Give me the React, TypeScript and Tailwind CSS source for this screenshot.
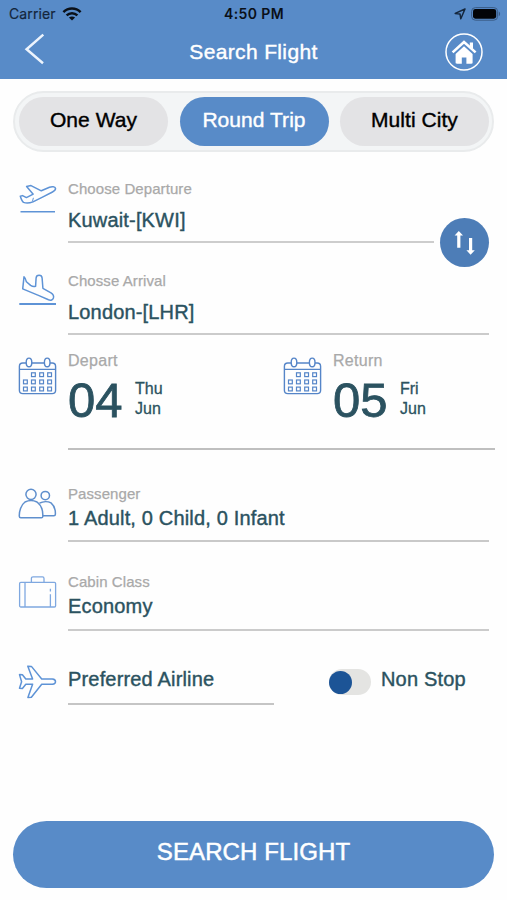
import React, { useState } from 'react';
import clsx from 'clsx';

const TABS = ['One Way', 'Round Trip', 'Multi City'];

/* ---------- Icons ---------- */

const DepartureIcon = () => (
    <svg width="40" height="32" viewBox="0 0 40 32" fill="none" stroke="#5e93d6" strokeWidth="1.5" strokeLinejoin="round">
        <path d="M2.3 13.3 L4.6 12.6 L8.4 14.6 L15.2 11.2 L8.6 3.4 L13 2.6 L23.3 7.8 L31.5 4.2 C34 3.2 37 3.6 37.5 5.2 C37.8 6.6 36.4 8 34.5 9 L24.5 14.2 L15 18.9 C11.5 20.2 8 20.4 5.6 19.4 C4 18.4 3 15.6 2.3 13.3Z" />
        <path d="M15.4 14.8 L14.4 18.6" strokeWidth="1" />
        <path d="M2.5 28.8 H37" strokeWidth="1.6" />
    </svg>
);

const ArrivalIcon = () => (
    <svg width="40" height="33" viewBox="0 0 40 33" fill="none" stroke="#5e93d6" strokeWidth="1.5" strokeLinejoin="round">
        <path d="M6 3.8 L4.7 15.9 L21 22.6 L30.5 26.8 C33 27.8 34.8 26.8 35.4 25 C36 23 35 21 33 19.8 L24.9 15.3 L24.1 5 C23.8 1.4 18.4 1.3 18.1 5 L17.6 13.2 C15.8 13.8 14.2 13.4 12.6 12.4 L8.4 8.8 C8 7 7.4 5 6 3.8Z" />
        <path d="M1.3 31 H38" strokeWidth="1.8" />
    </svg>
);

const CALENDAR_CELLS = [
    [15.4, 18.7], [23.6, 18.7], [31.6, 18.7],
    [7.4, 25.9], [15.4, 25.9], [23.6, 25.9], [31.6, 25.9],
    [7.4, 33], [15.4, 33], [23.6, 33], [31.6, 33],
];

const CalendarIcon = () => (
    <svg width="40" height="40" viewBox="0 0 40 40" fill="none" stroke="#5585c8" strokeWidth="1.4">
        <rect x="1.4" y="7" width="36.2" height="30.6" rx="3.4" />
        <path d="M1.4 13.4 H37.6" strokeWidth="1.1" />
        <ellipse cx="11" cy="6.4" rx="2.8" ry="4.3" fill="white" />
        <ellipse cx="29.2" cy="6.4" rx="2.8" ry="4.3" fill="white" />
        {CALENDAR_CELLS.map(([x, y]) => (
            <rect key={`${x}-${y}`} x={x - 1.9} y={y - 1.9} width="3.8" height="3.8" strokeWidth="1.2" />
        ))}
    </svg>
);

const PassengerIcon = () => (
    <svg width="40" height="34" viewBox="0 0 40 34" fill="none" stroke="#5f8fcd" strokeWidth="1.5" strokeLinejoin="round">
        <circle cx="27.3" cy="9.6" r="4.2" />
        <path d="M21.5 17.2 C25 15.2 30 15.2 33 16.9 C36 19.4 37.5 24 37.4 28.2 C37.4 29.2 36.8 29.7 35.8 29.7 H24.7" />
        <circle cx="13" cy="8.3" r="5.1" />
        <path d="M7 16 C10.5 14.2 15.5 14.2 19 16 C23 19 25.1 25 24.8 30.4 C24.8 31.3 24.2 31.7 23.3 31.7 H2.8 C1.8 31.7 1.3 31.2 1.3 30.2 C1.1 25 3.2 18.8 7 16Z" />
    </svg>
);

const SuitcaseIcon = () => (
    <svg width="40" height="36" viewBox="0 0 40 36" fill="none" stroke="#7fa8e0" strokeWidth="1.3" strokeLinejoin="round">
        <rect x="1.6" y="8.4" width="36" height="24.6" rx="1.2" />
        <path d="M13.4 8.4 V4.4 C13.4 3.3 14 2.8 15 2.8 H24.5 C25.6 2.8 26 3.3 26 4.4 V8.4" />
        <path d="M7 8.4 V33 M32.4 20.2 V33 M32.4 14.8 V17.6" />
    </svg>
);

const PlaneIcon = () => (
    <svg width="40" height="36" viewBox="0 0 40 36" fill="none" stroke="#5e93d6" strokeWidth="1.5" strokeLinejoin="round">
        <path d="M9.8 2.2 L13.4 2.4 L23.7 15 H34.4 C36.2 15.2 37.5 16.4 37.5 17.7 C37.5 19 36.2 20.1 34.4 20.3 H23.7 L13.4 33.2 L9.9 33.4 L14.6 20.3 H7.8 L4.4 24.5 L1.5 24.3 L3.6 17.7 L1.5 10.6 L4.4 10.7 L7.8 15 H14.6Z" />
    </svg>
);

const HomeIcon = () => (
    <svg width="38" height="38" viewBox="0 0 38 38" fill="none">
        <circle cx="19" cy="19" r="18" stroke="white" strokeWidth="1.5" />
        <path d="M7.6 19.4 L19 9 L30.6 19.4" stroke="white" strokeWidth="2.6" />
        <path d="M24.8 9.4 H28 V16 L24.8 13.2Z" fill="white" />
        <path d="M19 13.2 L27.6 21 V29.6 C27.6 30.4 27.2 30.8 26.4 30.8 H21.4 V24.4 H16.8 V30.8 H11.8 C11 30.8 10.6 30.4 10.6 29.6 V21Z" fill="white" />
    </svg>
);

const SwapIcon = () => (
    <svg width="49" height="49" viewBox="0 0 49 49" fill="white">
        <path d="M18.8 13 L23 17.6 H20.4 V29.8 H17.2 V17.6 H14.6Z" />
        <path d="M30.6 36.8 L26.4 32.2 H29 V20 H32.2 V32.2 H34.8Z" />
    </svg>
);

const WifiIcon = () => (
    <svg width="20" height="14" viewBox="0 0 20 14" fill="none" stroke="#0a1018" strokeWidth="2.5">
        <path d="M1.4 5.1 C6.2 0.4 13.8 0.4 18.6 5.1" />
        <path d="M4.6 8.3 C7.7 5.4 12.3 5.4 15.4 8.3" />
        <path d="M10 13.6 L6.9 10.5 C8.6 9 11.4 9 13.1 10.5Z" fill="#0a1018" stroke="none" />
    </svg>
);

const LocationIcon = () => (
    <svg width="12" height="12" viewBox="0 0 12 12" fill="none" stroke="#14263c" strokeWidth="1.5" strokeLinejoin="round">
        <path d="M11 1 L1.2 5.4 L6 6 L6.8 10.8Z" />
    </svg>
);

const BatteryIcon = () => (
    <svg width="30" height="14" viewBox="0 0 30 14">
        <rect x="0.6" y="0.6" width="26" height="12.6" rx="3.8" fill="none" stroke="#3a5c86" strokeWidth="1" />
        <rect x="2" y="2.1" width="23.2" height="9.6" rx="2.4" fill="#020407" />
        <path d="M27.8 4.6 C29.6 5.4 29.6 8.4 27.8 9.2Z" fill="#3a5c86" />
    </svg>
);

/* ---------- Form pieces ---------- */

const Label = ({ children }: { children: React.ReactNode }) => (
    <span className="block text-[15px] leading-[17px] tracking-[0.08px] text-[#a9a9a9] [-webkit-text-stroke:0.25px_#a9a9a9]">
        {children}
    </span>
);

const Value = ({ children }: { children: React.ReactNode }) => (
    <span className="block text-[20px] leading-[21px] tracking-[0.17px] text-[#2b5260] whitespace-nowrap [-webkit-text-stroke:0.4px_#2b5260]">
        {children}
    </span>
);

interface DateFieldProps {
    label: string;
    date: string;
    weekday: string;
    month: string;
}

const DateField = ({ label, date, weekday, month }: DateFieldProps) => (
    <div className="flex w-[265px] shrink-0 gap-[10px]">
        <div className="pt-[5px]">
            <CalendarIcon />
        </div>
        <div className="text-[#2b5260]">
            <span className="block text-[16px] leading-[19px] tracking-[0.3px] text-[#a9a9a9] [-webkit-text-stroke:0.25px_#a9a9a9]">{label}</span>
            <div className="flex pt-[5px]">
                <span className="w-[67px] text-[49px] leading-[50px] [-webkit-text-stroke:0.8px_#2b5260]">{date}</span>
                <div className="flex flex-col pt-1 text-[16px] leading-5 [-webkit-text-stroke:0.3px_#2b5260]">
                    <span>{weekday}</span>
                    <span>{month}</span>
                </div>
            </div>
        </div>
    </div>
);

export default function App() {
    const [tab, setTab] = useState('Round Trip');
    const [nonStop, setNonStop] = useState(false);

    return (
        <div className="flex h-[900px] w-[507px] flex-col overflow-hidden bg-[#fefefe] font-['Liberation_Sans',Arial,sans-serif]">
            {/* Header */}
            <header className="h-[79px] shrink-0 bg-[#588bc8]">
                <div className="grid h-[27px] grid-cols-3 items-center pl-[9px] pr-[6px] font-['Inter',sans-serif] text-[#0a1018]">
                    <div className="flex items-center gap-[6px]">
                        <span className="w-[47px] text-[14px] leading-[27px] tracking-[0.1px] text-[#14263c] [-webkit-text-stroke:0.2px_#14263c]">Carrier</span>
                        <WifiIcon />
                    </div>
                    <span className="-ml-[2px] text-center text-[14px] font-semibold leading-[27px] tracking-[0.4px]">4:50 PM</span>
                    <div className="flex items-center justify-end gap-[5px]">
                        <LocationIcon />
                        <BatteryIcon />
                    </div>
                </div>
                <div className="flex h-[50px] items-center justify-between pl-6 pr-6">
                    <button className="w-[38px] -translate-y-[3px]" aria-label="Back">
                        <svg width="22" height="32" viewBox="0 0 22 32" fill="none" stroke="#edf4fd" strokeWidth="2.5">
                            <path d="M19.3 1.6 L2.6 16.2 L19 30.2" />
                        </svg>
                    </button>
                    <h1 className="text-[21px] leading-[50px] tracking-[0.35px] text-white [-webkit-text-stroke:0.4px_white]">Search Flight</h1>
                    <button aria-label="Home">
                        <HomeIcon />
                    </button>
                </div>
            </header>

            {/* Trip type */}
            <div className="mx-[13px] mt-3 flex h-[61px] shrink-0 items-center justify-between rounded-full border-2 border-[#e9ebec] bg-[#f3f5f6] pl-1 pr-[3px]">
                {TABS.map((name) => (
                    <button
                        key={name}
                        onClick={() => setTab(name)}
                        className={clsx(
                            'h-[49px] w-[149px] rounded-full pb-[4px] text-[21px] leading-[45px] tracking-[0.05px]',
                            tab === name
                                ? 'bg-[#588bc8] text-white [-webkit-text-stroke:0.4px_white]'
                                : 'bg-[#e3e3e5] text-black [-webkit-text-stroke:0.4px_black]'
                        )}
                    >
                        {name}
                    </button>
                ))}
            </div>

            <main className="flex flex-col pl-[18px]">
                {/* Departure */}
                <div className="mt-7 flex h-[63px]">
                    <div className="w-[50px] pt-[3px]">
                        <DepartureIcon />
                    </div>
                    <div className="w-[366px] border-b-2 border-[#cdcdcd]">
                        <Label>Choose Departure</Label>
                        <div className="pt-[13px]">
                            <Value>Kuwait-[KWI]</Value>
                        </div>
                    </div>
                    <button className="-mb-6 ml-[6px] h-[49px] w-[49px] self-end rounded-full bg-[#4d7db7]" aria-label="Swap">
                        <SwapIcon />
                    </button>
                </div>

                {/* Arrival */}
                <div className="mt-[29px] flex h-[63px]">
                    <div className="w-[50px] pt-px">
                        <ArrivalIcon />
                    </div>
                    <div className="w-[421px] border-b-2 border-[#cbcbcb]">
                        <Label>Chosse Arrival</Label>
                        <div className="pt-[13px]">
                            <Value>London-[LHR]</Value>
                        </div>
                    </div>
                </div>

                {/* Dates */}
                <div className="mt-4 flex h-[97px]">
                    <DateField label="Depart" date="04" weekday="Thu" month="Jun" />
                    <DateField label="Return" date="05" weekday="Fri" month="Jun" />
                </div>
                <div className="ml-[50px] h-[2px] w-[427px] bg-[#bfbfbf]" />

                {/* Passengers */}
                <div className="mt-[35px] flex h-[57px]">
                    <div className="w-[50px] pt-px">
                        <PassengerIcon />
                    </div>
                    <div className="w-[421px] border-b-2 border-[#c9c9c9]">
                        <Label>Passenger</Label>
                        <div className="pt-[6px]">
                            <Value>1 Adult, 0 Child, 0 Infant</Value>
                        </div>
                    </div>
                </div>

                {/* Cabin */}
                <div className="mt-[31px] flex h-[58px]">
                    <div className="w-[50px] pt-px">
                        <SuitcaseIcon />
                    </div>
                    <div className="w-[421px] border-b-2 border-[#cbcbcb]">
                        <Label>Cabin Class</Label>
                        <div className="pt-[6px]">
                            <Value>Economy</Value>
                        </div>
                    </div>
                </div>

                {/* Airline + non stop */}
                <div className="mt-[33px] flex h-[41px]">
                    <div className="w-[50px]">
                        <PlaneIcon />
                    </div>
                    <div className="w-[206px] border-b-2 border-[#c5c5c5] pt-[5px]">
                        <Value>Preferred Airline</Value>
                    </div>
                    <button
                        role="switch"
                        aria-checked={nonStop}
                        aria-label="Non Stop"
                        onClick={() => setNonStop(!nonStop)}
                        className={clsx(
                            'ml-[55px] mt-[5px] flex h-[26px] w-[42px] items-center rounded-full bg-[#e4e4e2]',
                            nonStop && 'justify-end'
                        )}
                    >
                        <span className="h-[23px] w-[23px] rounded-full bg-[#1c5496]" />
                    </button>
                    <div className="ml-[10px] pt-[5px]">
                        <Value>Non Stop</Value>
                    </div>
                </div>
            </main>

            <button className="mx-[13px] mt-auto mb-3 h-[67px] shrink-0 rounded-full bg-[#588bc8] pb-[6px] text-[24px] leading-[61px] tracking-[0.1px] text-white [-webkit-text-stroke:0.5px_white]">
                SEARCH FLIGHT
            </button>
        </div>
    );
}
